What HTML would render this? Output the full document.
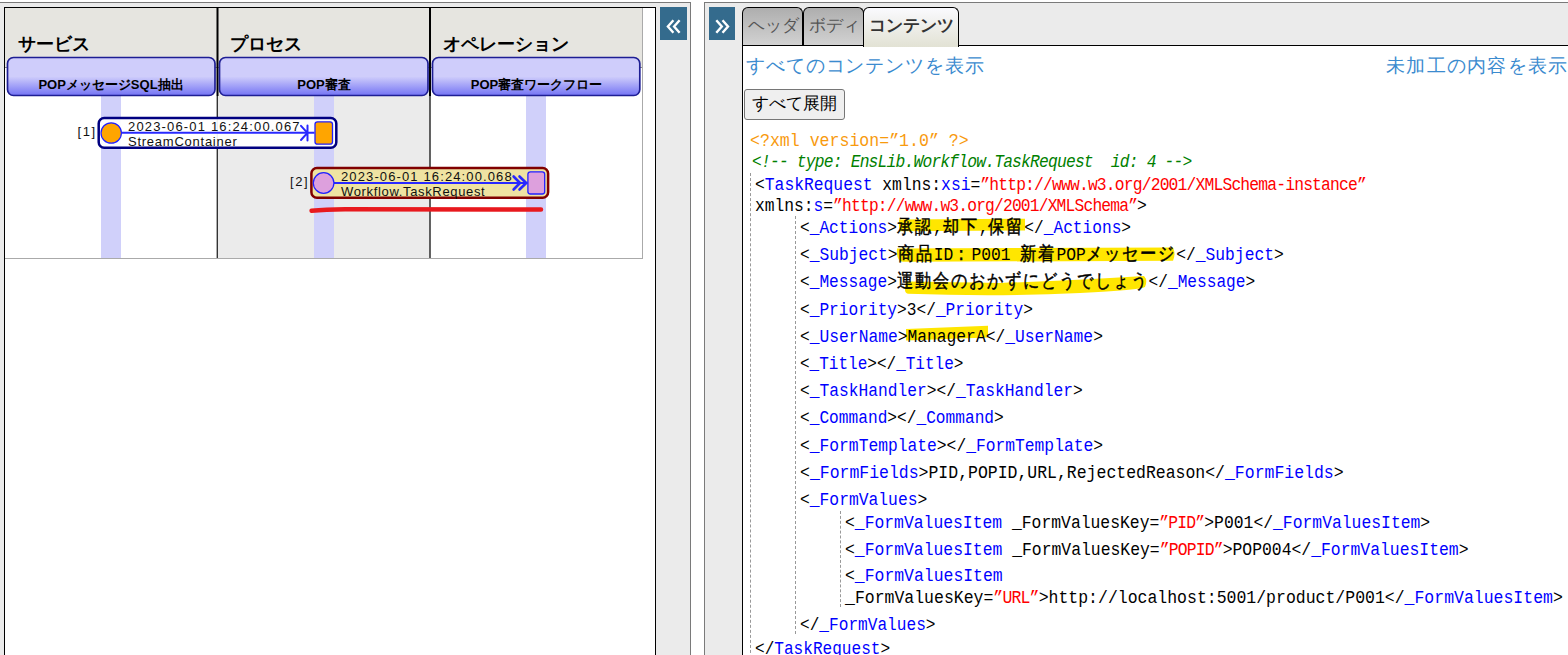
<!DOCTYPE html>
<html><head><meta charset="utf-8">
<style>
*{margin:0;padding:0;box-sizing:border-box}
html,body{width:1568px;height:655px;overflow:hidden;background:#fff;font-family:"Liberation Sans",sans-serif}
.a{position:absolute}
.btn{position:absolute;top:7px;width:27px;height:33px;background:#346b8d;color:#fff;font:bold 24px "Liberation Sans",sans-serif;text-align:center;line-height:30px}
.tab{position:absolute;top:7px;height:38px;border:1.5px solid #000;border-bottom:none;border-radius:6px 6px 0 0;white-space:nowrap;font-size:17px;line-height:20px;padding-top:8px}
.x{position:absolute;white-space:pre;line-height:20px;font-family:"Liberation Mono",monospace;font-size:19px;transform-origin:0 0;transform:scaleX(0.8125);color:#000}
.t{color:#0000ff}
.s{color:#ff0000;letter-spacing:-0.96px}
.pi{color:#f89a0e}
.cm{color:#008000;font-style:italic;letter-spacing:-0.94px}
.j{letter-spacing:2.15px;-webkit-text-stroke:0.45px #000}
.dash{position:absolute;width:0;border-left:1px dashed #999}
</style></head><body>
<!-- LEFT PANEL -->
<div class="a" style="left:-1px;top:2px;width:692px;height:660px;background:#ebebeb;border:1px solid #7a7a7a"></div>
<div class="a" style="left:4px;top:7px;width:652px;height:660px;border:1px solid #000;background:#fff"></div>
<div class="btn" style="left:660px"><svg width="27" height="33" style="position:absolute;left:0;top:0"><path d="M13.4 13.2 L7.9 19.5 L13.4 25.8 M19.6 13.2 L14.1 19.5 L19.6 25.8" fill="none" stroke="#fff" stroke-width="2.4" stroke-linejoin="miter" stroke-miterlimit="10"/></svg></div>

<svg class="a" style="left:0;top:0" width="1568" height="655">
 <defs>
  <linearGradient id="bg" x1="0" y1="0" x2="0" y2="1">
   <stop offset="0" stop-color="#cfcdfb"/><stop offset="0.5" stop-color="#cfcdfb"/><stop offset="1" stop-color="#7474f4"/>
  </linearGradient>
 </defs>
 <!-- header -->
 <rect x="5" y="8" width="637" height="60" fill="#e6e5e0"/>
 <rect x="217" y="68" width="213" height="190" fill="#ebebeb"/>
 <line x1="5" y1="67.5" x2="642" y2="67.5" stroke="#8a8a8a" stroke-width="1"/>
 <!-- dividers -->
 <rect x="216.5" y="8" width="2" height="88" fill="#000"/>
 <rect x="216.6" y="96" width="1.4" height="162" fill="#333"/>
 <rect x="429" y="8" width="2" height="88" fill="#000"/>
 <rect x="429.3" y="96" width="1.4" height="162" fill="#222"/>
 <rect x="642" y="8" width="1" height="251" fill="#aaa"/>
 <rect x="5" y="258" width="638" height="1" fill="#aaa"/>
 <!-- lifelines -->
 <rect x="101" y="96" width="20" height="162" fill="#d0d0fa"/>
 <rect x="314" y="96" width="20" height="162" fill="#d0d0fa"/>
 <rect x="526" y="96" width="20" height="162" fill="#d0d0fa"/>
 <!-- boxes -->
 <rect x="7.5" y="57.5" width="207.5" height="38" rx="6" fill="url(#bg)" stroke="#1e1e94" stroke-width="1.7"/>
 <rect x="219.5" y="57.5" width="208.5" height="38" rx="6" fill="url(#bg)" stroke="#1e1e94" stroke-width="1.7"/>
 <rect x="432.5" y="57.5" width="207.3" height="38" rx="6" fill="url(#bg)" stroke="#1e1e94" stroke-width="1.7"/>
 <g font-family="Liberation Sans" font-weight="bold" font-size="18" fill="#000">
  <text x="18" y="50">サービス</text>
  <text x="230" y="50">プロセス</text>
  <text x="443" y="50">オペレーション</text>
 </g>
 <g font-family="Liberation Sans" font-weight="bold" font-size="13" fill="#000" text-anchor="middle">
  <text x="111" y="89">POPメッセージSQL抽出</text>
  <text x="324" y="89">POP審査</text>
  <text x="536.5" y="89">POP審査ワークフロー</text>
 </g>
 <!-- event 1 -->
 <rect x="98.7" y="117.9" width="237.6" height="29.9" rx="5.5" fill="#fff" fill-opacity="0.93" stroke="#000080" stroke-width="2.5"/>
 <line x1="121" y1="132.8" x2="314.5" y2="132.8" stroke="#2828ff" stroke-width="2"/>
 <path d="M301 125.8 L307.4 132.8 L301 140 M307.5 125.5 V140.5" fill="none" stroke="#2828ff" stroke-width="2" stroke-linecap="round" stroke-linejoin="round"/>
 <circle cx="111.2" cy="133" r="10.2" fill="#ffa500" stroke="#2020ff" stroke-width="1.2"/>
 <rect x="315" y="121.8" width="17.5" height="22.4" rx="2.5" fill="#ffa500" stroke="#2020ff" stroke-width="1.3"/>
 <!-- event 2 -->
 <rect x="311.4" y="168.1" width="236.7" height="29.6" rx="5.5" fill="#efe3a2" stroke="#800000" stroke-width="2.5"/>
 <line x1="334" y1="183" x2="527.5" y2="183" stroke="#2828ff" stroke-width="2"/>
 <path d="M513.6 176.5 L520 183 L513.6 189.5 M519.5 176.5 L526.2 183 L519.5 189.5" fill="none" stroke="#2828ff" stroke-width="2.6" stroke-linecap="round" stroke-linejoin="round"/>
 <circle cx="323.6" cy="183" r="10.3" fill="#dda0dd" stroke="#2020ff" stroke-width="1.2"/>
 <rect x="527.9" y="171.8" width="16.8" height="22.2" rx="2.5" fill="#dda0dd" stroke="#2020ff" stroke-width="1.3"/>
 <g font-family="Liberation Sans" font-size="13" fill="#111">
  <text x="77.5" y="136" textLength="17.5" lengthAdjust="spacing">[1]</text>
  <text x="128" y="130.7" textLength="171.6" lengthAdjust="spacing">2023-06-01 16:24:00.067</text>
  <text x="128" y="145.7" textLength="108.8" lengthAdjust="spacing">StreamContainer</text>
  <text x="290" y="186" textLength="17.5" lengthAdjust="spacing">[2]</text>
  <text x="341" y="180.6" textLength="170.7" lengthAdjust="spacing">2023-06-01 16:24:00.068</text>
  <text x="341" y="195.7" textLength="143.7" lengthAdjust="spacing">Workflow.TaskRequest</text>
 </g>
 <path d="M311.6 210.8 Q325 209.4 345 209.3 L541 209.4" fill="none" stroke="#e8191e" stroke-width="4.5" stroke-linecap="round"/>
</svg>

<!-- RIGHT PANEL -->
<div class="a" style="left:704px;top:2px;width:870px;height:660px;background:#ebebeb;border:1px solid #7a7a7a"></div>
<div class="btn" style="left:709px;width:26px"><svg width="27" height="33" style="position:absolute;left:0;top:0"><path d="M7.3 13.2 L12.8 19.5 L7.3 25.8 M13.5 13.2 L19 19.5 L13.5 25.8" fill="none" stroke="#fff" stroke-width="2.4" stroke-linejoin="miter" stroke-miterlimit="10"/></svg></div>
<div class="a" style="left:742px;top:45px;width:830px;height:620px;background:#fff;border-top:1px solid #000;border-left:1.5px solid #000"></div>
<div class="tab" style="left:742px;width:61px;background:linear-gradient(#aeaeae,#d2d2d2);color:#555;padding-left:5px">ヘッダ</div>
<div class="tab" style="left:803px;width:61px;background:linear-gradient(#aeaeae,#d2d2d2);color:#555;padding-left:5px">ボディ</div>
<div class="tab" style="left:863px;width:96px;height:40px;background:linear-gradient(#fafafe,#e2e2d4);color:#333;font-weight:bold;padding-left:5px">コンテンツ</div>

<div class="a" style="left:746px;top:56px;font-size:18.5px;letter-spacing:0.9px;line-height:20px;color:#3b8bcf;white-space:nowrap">すべてのコンテンツを表示</div>
<div class="a" style="left:1386px;top:56px;font-size:18.5px;letter-spacing:1.25px;line-height:20px;color:#3b8bcf;white-space:nowrap">未加工の内容を表示</div>
<div class="a" style="left:744px;top:89px;width:101px;height:31px;background:#efefef;border:1px solid #767676;border-radius:3px;font-size:17px;line-height:28px;text-align:center;color:#000;white-space:nowrap">すべて展開</div>

<!-- XML -->
<svg class="a" style="left:0;top:0" width="1568" height="655">
 <g fill="#ffe600">
  <path d="M899 219.5 L1025 218.8 L1025 230.5 L899 231.2 Z"/>
  <path d="M897 248.5 Q896 261.5 903 261.8 L1173 260.8 Q1176 254 1173 247.5 Z"/>
  <path d="M906 281.5 Q903 293 908 293.8 Q1000 297 1080 293 Q1140 290 1145 287 Q1148 280 1144 276 Q1080 280 1000 283 Q950 282 906 281.5 Z"/>
  <path d="M906 329 L988 325.7 L988 337.6 L906 340.6 Z"/>
 </g>
</svg>
<div class="dash" style="left:750px;top:173px;height:490px"></div>
<div class="dash" style="left:795px;top:216px;height:418px"></div>
<div class="dash" style="left:840px;top:511px;height:96px"></div>
<!--XS-->
<div class="x" style="left:750.1px;top:131px;transform:scaleX(0.8717)"><span class="pi">&lt;?xml version=”1.0” ?&gt;</span></div>
<div class="x" style="left:752.0px;top:151.5px;transform:scaleX(0.8573)"><span class="cm">&lt;!-- type: EnsLib.Workflow.TaskRequest  id: 4 --&gt;</span></div>
<div class="x" style="left:755.0px;top:175px;transform:scaleX(0.8589)">&lt;<span class="t">TaskRequest</span> xmlns:<span class="t">xsi</span>=<span class="s">”http://www.w3.org/2001/XMLSchema-instance”</span></div>
<div class="x" style="left:755.0px;top:196px;transform:scaleX(0.8562)">xmlns:<span class="t">s</span>=<span class="s">”http://www.w3.org/2001/XMLSchema”</span>&gt;</div>
<div class="x" style="left:800.0px;top:218px;transform:scaleX(0.8506)">&lt;<span class="t">_Actions</span>&gt;<span class="j">承認</span>,<span class="j">却下</span>,<span class="j">保留</span>&lt;/<span class="t">_Actions</span>&gt;</div>
<div class="x" style="left:800.0px;top:245.2px;transform:scaleX(0.856)">&lt;<span class="t">_Subject</span>&gt;<span class="j">商品</span>ID<span class="j">：</span>P001 <span class="j">新着</span>POP<span class="j">メッセージ</span>&lt;/<span class="t">_Subject</span>&gt;</div>
<div class="x" style="left:800.0px;top:272.4px;transform:scaleX(0.8499)">&lt;<span class="t">_Message</span>&gt;<span class="j">運動会のおかずにどうでしょう</span>&lt;/<span class="t">_Message</span>&gt;</div>
<div class="x" style="left:800.0px;top:299.6px;transform:scaleX(0.8513)">&lt;<span class="t">_Priority</span>&gt;3&lt;/<span class="t">_Priority</span>&gt;</div>
<div class="x" style="left:800.0px;top:326.8px;transform:scaleX(0.8569)">&lt;<span class="t">_UserName</span>&gt;ManagerA&lt;/<span class="t">_UserName</span>&gt;</div>
<div class="x" style="left:800.0px;top:354px;transform:scaleX(0.843)">&lt;<span class="t">_Title</span>&gt;&lt;/<span class="t">_Title</span>&gt;</div>
<div class="x" style="left:800.0px;top:381.2px;transform:scaleX(0.8548)">&lt;<span class="t">_TaskHandler</span>&gt;&lt;/<span class="t">_TaskHandler</span>&gt;</div>
<div class="x" style="left:800.0px;top:408.4px;transform:scaleX(0.851)">&lt;<span class="t">_Command</span>&gt;&lt;/<span class="t">_Command</span>&gt;</div>
<div class="x" style="left:800.0px;top:435.6px;transform:scaleX(0.8572)">&lt;<span class="t">_FormTemplate</span>&gt;&lt;/<span class="t">_FormTemplate</span>&gt;</div>
<div class="x" style="left:800.0px;top:462.8px;transform:scaleX(0.8668)">&lt;<span class="t">_FormFields</span>&gt;PID,POPID,URL,RejectedReason&lt;/<span class="t">_FormFields</span>&gt;</div>
<div class="x" style="left:800.0px;top:490px;transform:scaleX(0.8585)">&lt;<span class="t">_FormValues</span>&gt;</div>
<div class="x" style="left:844.6px;top:513.3px;transform:scaleX(0.8614)">&lt;<span class="t">_FormValuesItem</span> _FormValuesKey=<span class="s">”PID”</span>&gt;P001&lt;/<span class="t">_FormValuesItem</span>&gt;</div>
<div class="x" style="left:844.6px;top:539.7px;transform:scaleX(0.8623)">&lt;<span class="t">_FormValuesItem</span> _FormValuesKey=<span class="s">”POPID”</span>&gt;POP004&lt;/<span class="t">_FormValuesItem</span>&gt;</div>
<div class="x" style="left:844.6px;top:566.2px;transform:scaleX(0.8641)">&lt;<span class="t">_FormValuesItem</span></div>
<div class="x" style="left:845.27px;top:587.5px;transform:scaleX(0.8674)">_FormValuesKey=<span class="s">”URL”</span>&gt;http://localhost:5001/product/P001&lt;/<span class="t">_FormValuesItem</span>&gt;</div>
<div class="x" style="left:800.0px;top:615.3px;transform:scaleX(0.8487)">&lt;/<span class="t">_FormValues</span>&gt;</div>
<div class="x" style="left:755.0px;top:639.2px;transform:scaleX(0.8462)">&lt;/<span class="t">TaskRequest</span>&gt;</div>
<!--XE-->

</body></html>
